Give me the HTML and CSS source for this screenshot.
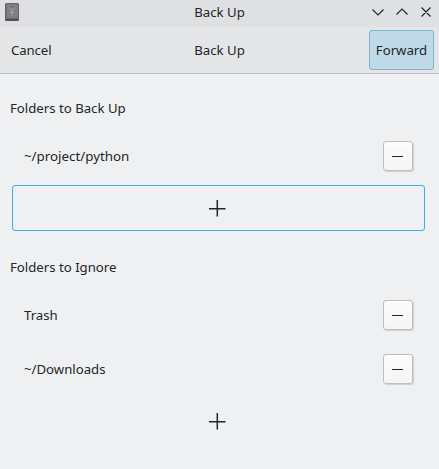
FILE: index.html
```html
<!DOCTYPE html>
<html lang="en"><head><meta charset="utf-8"><title>Back Up</title><link rel="stylesheet" href="styles.css"></head>
<body>
<header class="titlebar">
<svg class="app-icon" width="16" height="20" viewBox="0 0 16 20"><rect x="1" y="1" width="14" height="18" rx="1.5" fill="#66646a"/><rect x="2.500" y="2" width="11.500" height="14" rx="1" fill="#817f82"/><path d="M1.500 18h13" stroke="#4b4854" stroke-width="1.500"/><path d="M5 5.500l3 3 3-3M8 8.500v5M6 10.500h4" stroke="#a5a4a6"/><path d="M6.500 5h3" stroke="#69676d"/></svg>
<span class="title">Back Up</span>
<svg class="controls" width="64" height="16" viewBox="0 0 64 16"><path d="M2.500 5.500l5.500 5.500 5.500-5.500M26.500 10.500l5.500-5.500 5.500 5.500M51.500 3.500l9 9M60.500 3.500l-9 9"/></svg>
</header>
<nav class="toolbar"><button class="cancel">Cancel</button><span class="heading">Back Up</span><button class="forward">Forward</button></nav>
<main>
<section class="group first"><h2>Folders to Back Up</h2>
<div class="row"><span class="path">~/project/python</span><button class="remove" aria-label="Remove"><svg width="12" height="12"><path d="M0 6.500h11"/></svg></button></div>
<button class="add focused" aria-label="Add"><svg width="18" height="18"><path d="M9.300 1v16.500M1 9.700h16.500"/></svg></button></section>
<section class="group"><h2>Folders to Ignore</h2>
<div class="row"><span>Trash</span><button class="remove" aria-label="Remove"><svg width="12" height="12"><path d="M0 6.500h11"/></svg></button></div>
<div class="row"><span>~/Downloads</span><button class="remove" aria-label="Remove"><svg width="12" height="12"><path d="M0 6.500h11"/></svg></button></div>
<button class="add" aria-label="Add"><svg width="18" height="18"><path d="M9.300 1v16.500M1 9.700h16.500"/></svg></button></section>
</main>
</body></html>
```
FILE: styles.css
```css
*{box-sizing:border-box}
body{margin:0;height:469px;overflow:hidden;background:#eff0f1;color:#232629;font:13.2px/18px "Noto Sans",sans-serif}
button{font:inherit;color:inherit;margin:0;padding:0;border:0;background:none}
svg{display:block;fill:none;stroke:#232629}
.titlebar{height:27px;padding-bottom:3px;background:#dee0e2;display:grid;grid-template-columns:1fr auto 1fr;align-items:center}
.app-icon{margin-left:4px;stroke:none}
.controls{justify-self:end;margin-right:5px;stroke-width:1.200}
.toolbar{height:47px;padding-bottom:1px;background:#e3e5e7;border-bottom:1px solid #bec0c2;display:grid;grid-template-columns:1fr auto 1fr;align-items:center}
.cancel{justify-self:start;margin-left:11px;letter-spacing:-.1px}
.forward{justify-self:end;width:65px;height:40px;margin-right:5px;background:#c0d9e8;border:1px solid #7cb4d4;border-radius:3px}
.path{font-size:13.333px}
.group{padding:0 14px 0 12px}
.first{padding-top:25px;padding-bottom:27px}
h2{font:inherit;margin:0 0 12px -2px}
.row{height:54px;display:flex;align-items:center;justify-content:space-between;padding:0 12px}
.remove{width:30px;height:30px;border:1px solid #bcbebf;border-radius:3px;background:linear-gradient(#fcfcfc,#f4f4f4);box-shadow:1px 1px 1px #0002;display:grid;place-items:center}
.add{width:100%;height:46px;margin-top:2px;padding-right:3px;border:1px solid transparent;border-radius:3px;display:grid;place-items:center}
.add svg{stroke-width:1.5}
.focused{border-color:#3daee9}
```
